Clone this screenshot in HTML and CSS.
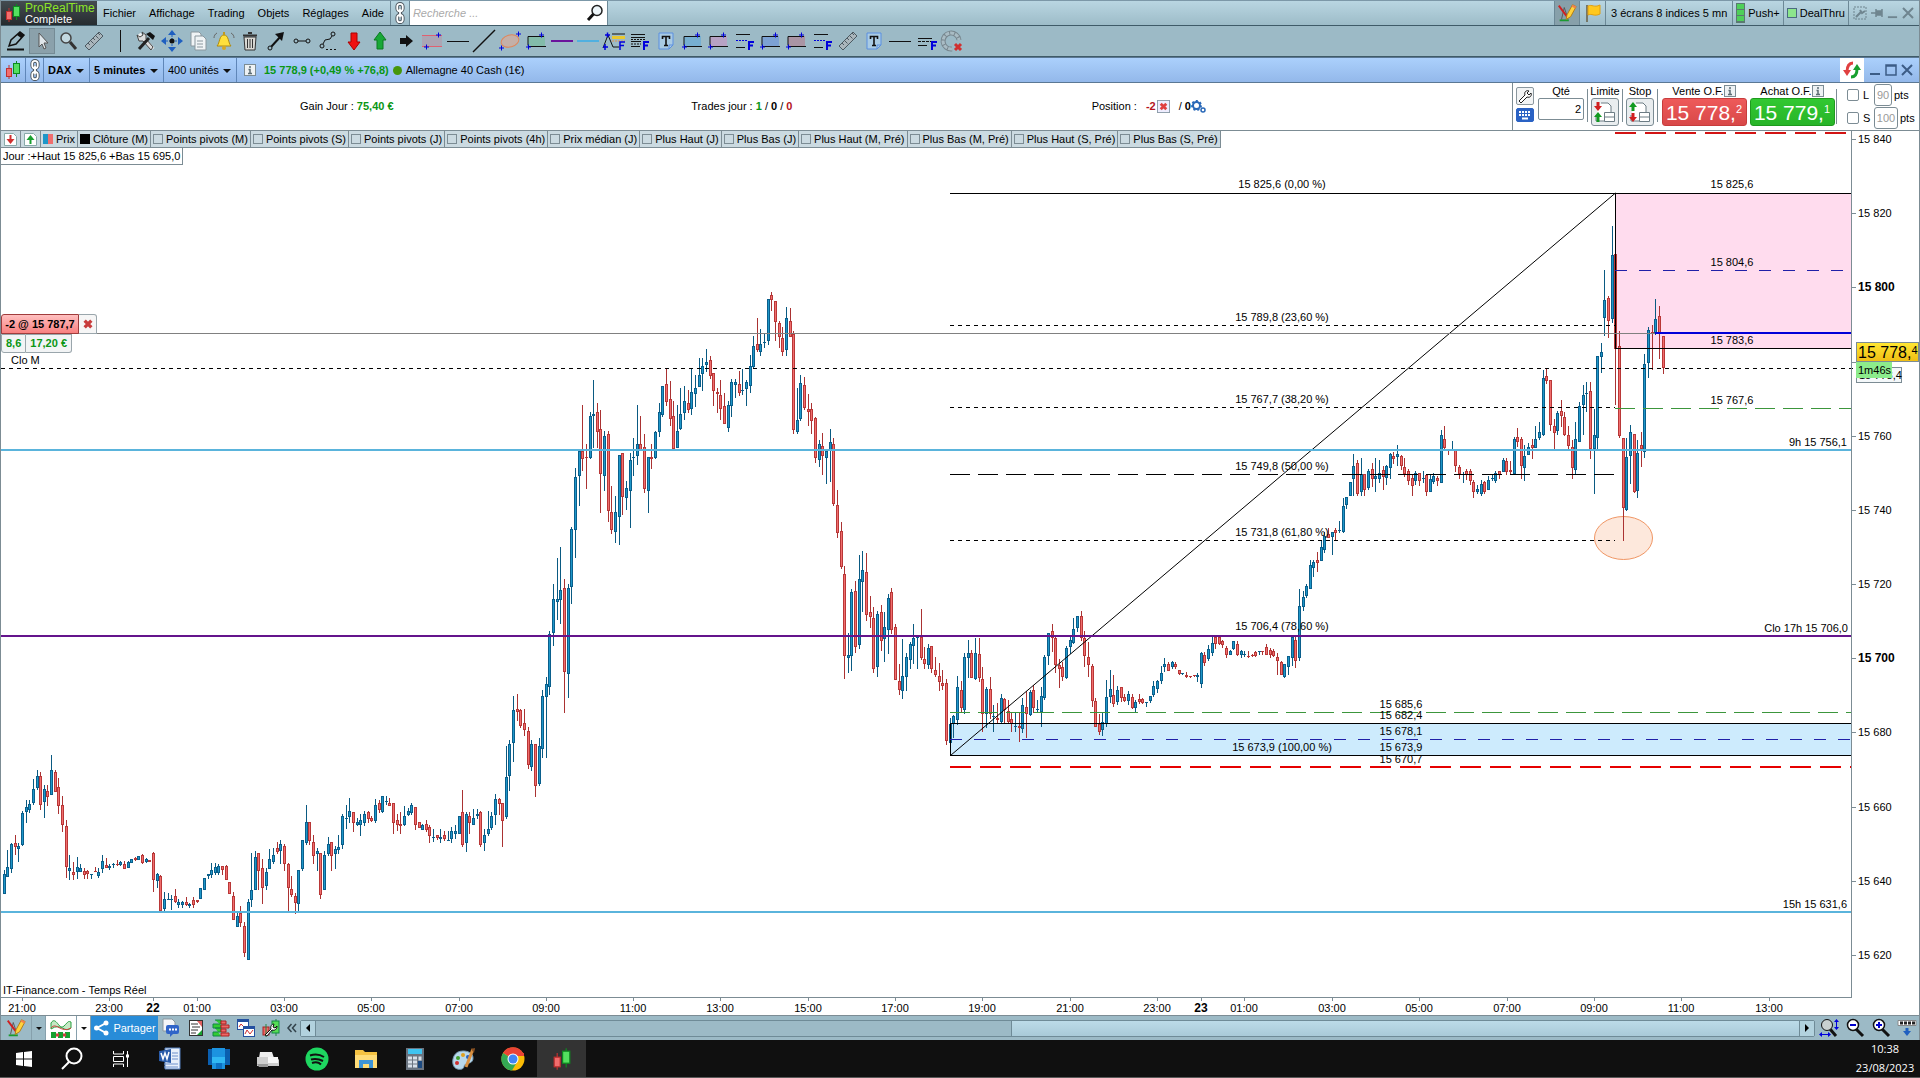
FILE: index.html
```html
<!DOCTYPE html>
<html lang="fr">
<head>
	<meta charset="UTF-8">
	<title>ProRealTime Complete - DAX 5 minutes</title>
	<link rel="stylesheet" href="styles.css">
</head>
<body>
	<!-- shared icons -->
	<svg class="defs" width="0" height="0">
		<symbol id="i-candles" viewBox="0 0 16 20">
			<path d="M4 5v14" stroke="#c03030"/><rect x="1.5" y="8.5" width="5" height="8" fill="#f26d6d" stroke="#c03030"/>
			<path d="M11.500 1v16" stroke="#0d8a20"/><rect x="8.500" y="3.500" width="6" height="10" fill="#54e060" stroke="#0d8a20"/>
		</symbol>
		<symbol id="i-chain" viewBox="0 0 12 24">
			<g fill="none" stroke="#4a545c" stroke-width="4"><rect x="3" y="2" width="6" height="8" rx="3"/><rect x="3" y="14" width="6" height="8" rx="3"/><path d="M6 7v10"/></g>
			<g fill="none" stroke="#fff" stroke-width="2"><rect x="3" y="2" width="6" height="8" rx="3"/><rect x="3" y="14" width="6" height="8" rx="3"/><path d="M6 7v10"/></g>
		</symbol>
		<symbol id="i-ruler" viewBox="0 0 24 24">
			<path d="M3 17L17 3l4 4L7 21z" fill="#aab6bc" stroke="#4c5a62"/><path d="M6 14l2 2M8.500 11.500l3 3M11 9l2 2M13.500 6.500l3 3M16 4l2 2" stroke="#4c5a62"/>
		</symbol>
		<symbol id="i-text" viewBox="0 0 24 24">
			<path d="M5 4h14v12l-4 4H5z" fill="#a9cbe4" stroke="#5b8fe0"/><path d="M19 16h-4v4" fill="none" stroke="#5b8fe0"/>
			<path d="M8.500 10V7.500h7V10M12 7.500v9M10 16.500h4" stroke="#111" stroke-width="1.600" fill="none"/>
		</symbol>
		<symbol id="i-zone" viewBox="0 0 24 24">
			<rect x="4" y="7" width="17" height="10" fill="currentColor" fill-opacity=".4"/><path d="M4 16.500V7.500h16M4 17.500h18" stroke="#111" fill="none"/>
			<path d="M2 18h5M4.500 15.500v5M15 6h5M17.500 3.500v5" stroke="#00d"/>
		</symbol>
		<symbol id="i-fib" viewBox="0 0 24 24">
			<path d="M4 5.500h14M4 18.500h9" stroke="#111"/><path d="M4 11.500h12" stroke="#00d" stroke-dasharray="2 1"/><path d="M17 21v-8h5M17 16.500h4" stroke="#00d" stroke-width="2" fill="none"/>
		</symbol>
		<symbol id="i-fiblines" viewBox="0 0 24 24">
			<path d="M3 5.500h14M3 8.500h14M3 12.500h10M3 17.500h9" stroke="#111"/><path d="M3 10.500h14M3 15h10" stroke="#111" stroke-dasharray="2 1"/><path d="M16 21v-8h5M16 16.500h4" stroke="#00d" stroke-width="2" fill="none"/>
		</symbol>
		<symbol id="i-draw" viewBox="0 0 24 24">
			<path d="M4 20h10" stroke="#1a9a30" stroke-width="2"/><path d="M6 19l3-13 4 12" stroke="#555" fill="none"/><path d="M3 4l9 12" stroke="#d02020" stroke-width="2"/>
			<path d="M12 14L18 3l4 2-6 11-5 3z" fill="#ffd23c" stroke="#b07a10"/><path d="M18 3l4 2-1 2-4-2z" fill="#f08050"/>
		</symbol>
		<symbol id="i-cross" viewBox="0 0 12 12">
			<path d="M2 2l8 8M10 2l-8 8" stroke="#c83c3c" stroke-width="4"/>
		</symbol>
		<symbol id="i-info" viewBox="0 0 12 12">
			<rect x=".5" y=".5" width="11" height="11" fill="#eef2f4" stroke="#7c8c94"/><path d="M6 2v2M4.500 5.500H6v4M4 9.500h4" stroke="#5c6c74" stroke-width="1.500" fill="none"/>
		</symbol>
		<symbol id="i-close" viewBox="0 0 12 12"><path d="M1 1l10 10M11 1L1 11" stroke="currentColor" stroke-width="2"/></symbol>
		<symbol id="i-min" viewBox="0 0 12 12"><path d="M1 10h10" stroke="currentColor" stroke-width="2"/></symbol>
	</svg>

	<div class="app">
		<header class="menubar">
			<div class="logo">
				<svg width="16" height="20"><use href="#i-candles"/></svg>
				<div class="logo-text"><b>ProRealTime</b><span>Complete</span></div>
			</div>
			<nav>
				<a href="#">Fichier</a><a href="#">Affichage</a><a href="#">Trading</a><a href="#">Objets</a><a href="#">Réglages</a><a href="#">Aide</a>
			</nav>
			<button class="chain" aria-label="Lier"><svg width="12" height="22"><use href="#i-chain"/></svg></button>
			<div class="search">
				<input type="text" placeholder="Recherche ..." aria-label="Recherche">
				<svg width="18" height="18" viewBox="0 0 18 18"><circle cx="11" cy="6.500" r="5" fill="#eef6fa" stroke="#222" stroke-width="1.500"/><path d="M7.500 10L2 16" stroke="#111" stroke-width="3"/></svg>
			</div>
			<div class="spacer"></div>
			<button class="pressed" aria-label="Dessin"><svg width="22" height="22"><use href="#i-draw"/></svg></button>
			<button class="flag" aria-label="Drapeau"><svg width="18" height="20" viewBox="0 0 18 20"><path d="M3 2v17" stroke="#776" stroke-width="2"/><path d="M4 3c4-2 6 2 12-1v9c-6 3-8-1-12 1z" fill="#ffc81e" stroke="#e0a010"/></svg></button>
			<button class="cell">3 écrans 8 indices 5 mn</button>
			<button class="cell push"><i></i>Push+</button>
			<button class="cell deal"><i></i>DealThru</button>
			<div class="cell win">
				<button aria-label="Options"><svg width="14" height="14" viewBox="0 0 14 14" fill="none" stroke="currentColor"><rect x="1" y="1" width="12" height="12" stroke-dasharray="2 1"/><path d="M3 11l5-5M7 4l2 3 3-2" stroke-width="2"/></svg></button>
				<button aria-label="Epingler"><svg width="12" height="12" viewBox="0 0 12 12"><path d="M0 6h5M5 2v8M6 4h4v4H6zM11 2v8" stroke="currentColor" fill="currentColor" stroke-width="1.500"/></svg></button>
				<button aria-label="Réduire"><svg width="11" height="11"><use href="#i-min"/></svg></button>
				<button aria-label="Fermer"><svg width="12" height="12"><use href="#i-close"/></svg></button>
			</div>
		</header>

		<div class="toolbar">
			<button aria-label="Crayon"><svg viewBox="0 0 24 24"><path d="M3 20.500h17" stroke="#111" stroke-width="2"/><path d="M5 17l2-6 9-8 4 3-8 9z" fill="none" stroke="#111" stroke-width="1.500"/><path d="M16 3l4 3-3 3-4-3z" fill="#111"/></svg></button>
			<button class="active" aria-label="Sélection"><svg viewBox="0 0 24 24"><path d="M9 4v14l3-3 2 5 2-1-2-5h4z" fill="#dfe6ea" stroke="#555"/></svg></button>
			<button aria-label="Loupe"><svg viewBox="0 0 24 24"><circle cx="10" cy="9" r="5" fill="#c2d8e0" stroke="#444" stroke-width="1.500"/><path d="M14 13l6 7" stroke="#333" stroke-width="3"/></svg></button>
			<button aria-label="Règle"><svg viewBox="0 0 24 24"><use href="#i-ruler"/></svg></button>
			<span class="bar"></span>
			<button aria-label="Outils"><svg viewBox="0 0 24 24"><path d="M5 5l14 15" stroke="#eee" stroke-width="4"/><path d="M3 6l3 2 3-2-1-3 4 3v4L19 18l-2 3-8-9-4 0z" fill="#ddd" stroke="#444"/><path d="M5 20l10-11" stroke="#222" stroke-width="3"/><path d="M12 5l4-2 5 4-2 4z" fill="#111"/></svg></button>
			<button aria-label="Déplacer"><svg viewBox="0 0 24 24"><path d="M12 1l4 5H8zM12 23l4-5H8zM1 12l5-4v8zM23 12l-5-4v8z" fill="#1f5fc0"/><path d="M12 6v12M6 12h12" stroke="#1f5fc0" stroke-dasharray="2 1"/><circle cx="12" cy="12" r="2.500" fill="#111"/></svg></button>
			<button aria-label="Copier"><svg viewBox="0 0 24 24"><g fill="#f0f4f6" stroke="#8a979e"><path d="M5 3h8l2 2v12H5z"/><path d="M9 7h8l3 3v11H9z"/></g><path d="M11 12h6M11 15h6M11 18h6" stroke="#8a979e"/></svg></button>
			<button aria-label="Alertes"><svg viewBox="0 0 24 24"><path d="M5 17c3-3 2-11 7-11s4 8 7 11z" fill="#ffe03c" stroke="#b08a10"/><circle cx="12" cy="19" r="2" fill="#d8a820"/><path d="M12 3v3" stroke="#c09a20" stroke-width="2"/><path d="M5 4c-2 1-3 3-3 5M19 4c2 1 3 3 3 5" stroke="#666" fill="none"/></svg></button>
			<button aria-label="Supprimer"><svg viewBox="0 0 24 24"><path d="M6 8h12l-1 13H7z" fill="#d9d9d4" stroke="#333"/><path d="M5 6.500h14M10 4h4" stroke="#333" stroke-width="2"/><path d="M9.500 10v9M12 10v9M14.500 10v9" stroke="#333"/></svg></button>
			<button aria-label="Flèche"><svg viewBox="0 0 24 24"><path d="M7 18L17 7" stroke="#111" stroke-width="2"/><path d="M20 3l-2 9-7-7z" fill="#111"/><circle cx="6" cy="19" r="2" fill="#9bb9c5" stroke="#111"/></svg></button>
			<button aria-label="Segment"><svg viewBox="0 0 24 24" fill="none" stroke="#111"><circle cx="6" cy="12" r="2"/><circle cx="18" cy="12" r="2"/><path d="M8 12h8"/></svg></button>
			<button aria-label="Ligne brisée"><svg viewBox="0 0 24 24" fill="none" stroke="#111"><circle cx="6" cy="17" r="2"/><circle cx="17" cy="5" r="2"/><path d="M7 15l2-4 5-1 2-3"/><path d="M10 20.500h10" stroke-dasharray="2 2"/></svg></button>
			<button aria-label="Flèche baisse"><svg viewBox="0 0 24 24"><path d="M9 4h6v9h3l-6 8-6-8h3z" fill="#f01010" stroke="#a00"/></svg></button>
			<button aria-label="Flèche hausse"><svg viewBox="0 0 24 24"><path d="M9 20h6v-9h3l-6-8-6 8h3z" fill="#18a838" stroke="#0a7a20"/></svg></button>
			<button aria-label="Flèche droite"><svg viewBox="0 0 24 24"><path d="M6 9h6V6l7 6-7 6v-3H6z" fill="#111"/></svg></button>
			<button aria-label="Canal"><svg viewBox="0 0 24 24"><path d="M2 7h20v10H2z" fill="#b49aa8" opacity=".6"/><path d="M2 6.500h20M2 17.500h20" stroke="#e06070"/><path d="M4 18h5M6.500 15.500v5M16 6h5M18.500 3.500v5" stroke="#00d"/></svg></button>
			<button aria-label="Horizontale"><svg viewBox="0 0 24 24"><path d="M1 12.500h22" stroke="#111"/></svg></button>
			<button aria-label="Droite"><svg viewBox="0 0 24 24"><path d="M1 23L23 1" stroke="#111" stroke-width="1.500"/></svg></button>
			<button aria-label="Ellipse"><svg viewBox="0 0 24 24"><ellipse cx="12" cy="12" rx="9" ry="6" fill="#c4b0a8" stroke="#e0865a" transform="rotate(-15 12 12)"/><path d="M1 19h5M3.500 16.500v5M18 5h5M20.500 2.500v5" stroke="#00d"/></svg></button>
			<button class="c-green" aria-label="Rectangle vert"><svg viewBox="0 0 24 24"><use href="#i-zone"/></svg></button>
			<button aria-label="Ligne violette"><svg viewBox="0 0 24 24"><path d="M1 12h22" stroke="#6a149c" stroke-width="2"/></svg></button>
			<button aria-label="Ligne bleue"><svg viewBox="0 0 24 24"><path d="M1 12h22" stroke="#50b0e0" stroke-width="2"/></svg></button>
			<button aria-label="Fibonacci"><svg viewBox="0 0 24 24"><path d="M1 19L6 6l5 12h6" stroke="#111" fill="none"/><path d="M10 5h13" stroke="#111"/><path d="M10 8.500h13" stroke="#e8c830" stroke-width="3"/><path d="M10 12h13" stroke="#e09050" stroke-dasharray="2 1"/><path d="M1 18h5M3 15v6M3 6h5M5.500 3.500v5M18 21v-8h5M18 16.500h4" stroke="#00d" stroke-width="1.500" fill="none"/></svg></button>
			<button aria-label="Niveaux"><svg viewBox="0 0 24 24"><use href="#i-fiblines"/></svg></button>
			<button aria-label="Texte"><svg viewBox="0 0 24 24"><use href="#i-text"/></svg></button>
			<button class="c-blue" aria-label="Zone bleue"><svg viewBox="0 0 24 24"><use href="#i-zone"/></svg></button>
			<button class="c-pink" aria-label="Zone rose"><svg viewBox="0 0 24 24"><use href="#i-zone"/></svg></button>
			<button aria-label="Niveaux 2"><svg viewBox="0 0 24 24"><use href="#i-fib"/></svg></button>
			<button class="c-indigo" aria-label="Zone indigo"><svg viewBox="0 0 24 24"><use href="#i-zone"/></svg></button>
			<button class="c-red" aria-label="Zone rouge"><svg viewBox="0 0 24 24"><use href="#i-zone"/></svg></button>
			<button aria-label="Niveaux 3"><svg viewBox="0 0 24 24"><use href="#i-fib"/></svg></button>
			<button aria-label="Mesure"><svg viewBox="0 0 24 24"><use href="#i-ruler"/></svg></button>
			<button aria-label="Texte 2"><svg viewBox="0 0 24 24"><use href="#i-text"/></svg></button>
			<button aria-label="Trait"><svg viewBox="0 0 24 24"><path d="M1 12.500h22" stroke="#111"/></svg></button>
			<button aria-label="Niveaux 4"><svg viewBox="0 0 24 24"><path d="M4 9.500h14M4 16.500h9" stroke="#111"/><path d="M4 12.500h13" stroke="#111" stroke-dasharray="3 1"/><path d="M18 21v-8h5M18 16.500h4" stroke="#00d" stroke-width="2" fill="none"/></svg></button>
			<button aria-label="Magnétisme"><svg viewBox="0 0 24 24"><path d="M12 20a8 8 0 1 1 7-9" fill="none" stroke="#77868e" stroke-width="5"/><path d="M12 20a8 8 0 1 1 7-9" fill="none" stroke="#a9bcc4" stroke-width="3" stroke-dasharray="4 1"/><path d="M15 15l6 6M21 15l-6 6" stroke="#d03030" stroke-width="3"/></svg></button>
		</div>

		<div class="titlebar">
			<span class="sym"><svg width="16" height="20"><use href="#i-candles"/></svg></span>
			<span class="lnk"><svg width="12" height="22"><use href="#i-chain"/></svg></span>
			<span class="drop"><select class="bold" aria-label="Valeur"><option>DAX</option></select></span>
			<span class="drop"><select class="bold" aria-label="Unité de temps"><option>5 minutes</option></select></span>
			<span class="drop"><select aria-label="Historique"><option>400 unités</option></select></span>
			<svg class="info" width="12" height="12"><use href="#i-info"/></svg>
			<b class="gain">15 778,9 (+0,49 % +76,8)</b>
			<i class="dot"></i>
			<span>Allemagne 40 Cash (1€)</span>
			<div class="spacer"></div>
			<button class="refresh" aria-label="Actualiser"><svg width="20" height="20" viewBox="0 0 20 20" fill="none" stroke-width="3"><path d="M11 3C6 3 5 7 5 12" stroke="#e04040"/><path d="M1 10h8l-4 6z" fill="#e04040"/><path d="M9 17c5 0 6-4 6-8" stroke="#18a030"/><path d="M11 10h8l-4-6z" fill="#18a030"/></svg></button>
			<div class="win">
				<button aria-label="Réduire"><svg width="12" height="12"><use href="#i-min"/></svg></button>
				<button aria-label="Agrandir"><svg width="12" height="12" viewBox="0 0 12 12"><path d="M1 1h10v10H1zM1 2h10" fill="none" stroke="currentColor" stroke-width="1.500"/></svg></button>
				<button aria-label="Fermer"><svg width="12" height="12"><use href="#i-close"/></svg></button>
			</div>
		</div>

		<section class="strip">
			<div class="stats">
				<div>Gain Jour : <b class="gain">75,40 €</b></div>
				<div>Trades jour : <b class="gain">1</b> / <b>0</b> / <b class="loss">0</b></div>
				<div class="pos">Position : <b class="loss">-2</b><svg class="sq" width="13" height="13" viewBox="-1 -1 14 14"><rect x="-.5" y="-.5" width="13" height="13" fill="#eef" stroke="#8a9aa8"/><path d="M3 3l6 6M9 3l-6 6" stroke="#e04040" stroke-width="3"/></svg> <span>/ <b>0</b></span><svg width="15" height="13" viewBox="0 0 15 13" fill="none" stroke="#2868b8"><circle cx="5.500" cy="5.500" r="3.500" stroke-width="2"/><circle cx="5.500" cy="5.500" r="4.500" stroke-width="2" stroke-dasharray="2 2"/><circle cx="12" cy="10" r="2" stroke-width="1.500"/></svg></div>
			</div>
			<form class="order">
				<div class="tools">
					<button type="button" aria-label="Réglages"><svg width="14" height="14" viewBox="0 0 14 14"><path d="M1 12l6-6c-1-3 1-5 4-4L9 4l2 2 2-2c1 3-1 5-4 4l-6 6z" fill="#fff" stroke="#222"/></svg></button>
					<button type="button" class="kb" aria-label="Clavier"><svg width="14" height="10" viewBox="0 0 14 10"><path d="M1 2h12M1 5h12" stroke="#fff" stroke-width="2" stroke-dasharray="2 1"/><path d="M4 8.500h6" stroke="#fff" stroke-width="2"/></svg></button>
				</div>
				<div class="col qty"><label for="qty">Qté</label><input id="qty" type="text" value="2"></div>
				<div class="col kind"><span>Limite</span><button type="button" aria-label="Limite"><svg width="26" height="24" viewBox="0 0 26 24"><path d="M9 3h7l3 3v15H4v-6" fill="#fff" stroke="#6c7c84"/><path d="M6 2v5" stroke="#d02020" stroke-width="3"/><path d="M2 6h8l-4 5z" fill="#d02020"/><path d="M6 22v-6" stroke="#109a20" stroke-width="3"/><path d="M2 17h8l-4-5z" fill="#109a20"/><path d="M12.500 12.500h10v9h-10zM12.500 17h10" fill="#fff" stroke="#6c7c84"/></svg></button></div>
				<div class="col kind"><span>Stop</span><button type="button" aria-label="Stop"><svg width="26" height="24" viewBox="0 0 26 24"><path d="M9 3h7l3 3v15H4v-6" fill="#fff" stroke="#6c7c84"/><path d="M6 11V6" stroke="#109a20" stroke-width="3"/><path d="M2 7h8L6 2z" fill="#109a20"/><path d="M6 13v6" stroke="#d02020" stroke-width="3"/><path d="M2 17h8l-4 5z" fill="#d02020"/><path d="M12.500 12.500h10v9h-10zM12.500 17h10" fill="#fff" stroke="#6c7c84"/></svg></button></div>
				<div class="col deal-col first"><span>Vente O.F.<svg width="12" height="12"><use href="#i-info"/></svg></span><button type="button" class="sell">15 778,<sup>2</sup></button></div>
				<div class="col deal-col"><span>Achat O.F.<svg width="12" height="12"><use href="#i-info"/></svg></span><button type="button" class="buy">15 779,<sup>1</sup></button></div>
				<div class="guards">
					<div><input type="checkbox" id="lim"><label for="lim">L</label><input type="text" value="90" aria-label="Limite pts">pts</div>
					<div><input type="checkbox" id="stp"><label for="stp">S</label><input type="text" class="wide" value="100" aria-label="Stop pts">pts</div>
				</div>
			</form>
		</section>

		<main class="chart">
			<svg id="plot"></svg>
			<div class="overlay">
				<div class="legend">
					<button aria-label="Descendre"><svg width="13" height="13" viewBox="0 0 13 13"><path d="M.5.5h9l3 3v9H.5z" fill="#fff" stroke="#8aa"/><path d="M6.500 2v5" stroke="#d03030" stroke-width="2"/><path d="M2.500 6h8l-4 5z" fill="#d03030"/></svg></button>
					<button aria-label="Monter"><svg width="13" height="13" viewBox="0 0 13 13"><path d="M.5.5h9l3 3v9H.5z" fill="#fff" stroke="#8aa"/><path d="M6.500 11V6" stroke="#18a030" stroke-width="2"/><path d="M2.500 7h8l-4-5z" fill="#18a030"/></svg></button>
					<span><i class="duo"></i>Prix</span>
					<span><i class="black"></i>Clôture (M)</span>
					<label><input type="checkbox">Points pivots (M)</label>
					<label><input type="checkbox">Points pivots (S)</label>
					<label><input type="checkbox">Points pivots (J)</label>
					<label><input type="checkbox">Points pivots (4h)</label>
					<label><input type="checkbox">Prix médian (J)</label>
					<label><input type="checkbox">Plus Haut (J)</label>
					<label><input type="checkbox">Plus Bas (J)</label>
					<label><input type="checkbox">Plus Haut (M, Pré)</label>
					<label><input type="checkbox">Plus Bas (M, Pré)</label>
					<label><input type="checkbox">Plus Haut (S, Pré)</label>
					<label><input type="checkbox">Plus Bas (S, Pré)</label>
				</div>
				<div class="day">Jour :+Haut 15 825,6 +Bas 15 695,0</div>
			</div>
			<div class="position" data-price="15787.7">
				<div><b class="entry">-2 @ 15 787,7</b><button aria-label="Clôturer"><svg width="10" height="10"><use href="#i-cross"/></svg></button></div>
				<div class="pnl"><b>8,6</b><b>17,20 €</b></div>
			</div>
			<div class="tag close" data-price="15778.4">15 778,4</div>
			<div class="tag last" data-price="15778.4">15 778,<sup>4</sup></div>
			<div class="tag timer" data-price="15778.4">1m46s</div>
		</main>

		<footer class="bottombar">
			<button class="w30" aria-label="Dessin"><svg width="22" height="22"><use href="#i-draw"/></svg></button>
			<button class="caret" aria-label="Menu dessin"></button>
			<button class="w30 white" aria-label="Indicateurs"><svg width="24" height="22" viewBox="0 0 24 22" fill="none"><path d="M2 6c5-8 8 8 13 3s4-5 7-4v6c-6 6-10-6-20 1z" fill="#c4e8c4" stroke="#28a040"/><path d="M2 11c5-7 10 6 20 0" stroke="#d04040"/><path d="M2 18h20" stroke="#18a030" stroke-width="6" stroke-dasharray="5 2"/><path d="M7 18h14" stroke="#d04040" stroke-width="3" stroke-dasharray="3 4"/></svg></button>
			<button class="caret white" aria-label="Menu indicateurs"></button>
			<button class="share"><svg width="16" height="16" viewBox="0 0 16 16"><path d="M13 3L4 8l9 5" stroke="#fff" stroke-width="2" fill="none"/><g fill="#fff"><circle cx="13" cy="3" r="2.500"/><circle cx="3.500" cy="8" r="2.500"/><circle cx="13" cy="13" r="2.500"/></g></svg>Partager</button>
			<div class="icons">
				<button aria-label="Commentaires"><svg viewBox="0 0 20 20"><path d="M2 1h9l3 3v9H2z" fill="#f4f6f8" stroke="#8a979e"/><rect x="5" y="7" width="13" height="9" rx="2" fill="#2f64c8"/><path d="M9 15v4l4-4z" fill="#2f64c8"/><path d="M8 11.500h8" stroke="#fff" stroke-width="2" stroke-dasharray="2 1"/></svg></button>
				<button aria-label="Ordres"><svg viewBox="0 0 20 20"><rect x="3.500" y="2.500" width="13" height="15" fill="#fff" stroke="#333"/><path d="M5 6h7M6 9h8M5 12h7M5 15h5" stroke="#333"/><path d="M11 3h5v6z" fill="#e06060"/><path d="M11 17l5-5v5z" fill="#18a030"/></svg></button>
				<button aria-label="Carnet"><svg viewBox="0 0 20 20"><path d="M4 2h6v4H2v4h8v-3M4 10h6v4H2v4h8" fill="#3c3" stroke="#184"/><path d="M10 3h5v3h-5zM10 7h8v3h-8zM10 11h5v3h-5zM10 15h8v3h-8z" fill="#e66" stroke="#a22"/></svg></button>
				<button aria-label="Fenêtres"><svg viewBox="0 0 20 20"><g fill="#fff" stroke="#2450a0"><rect x="1.500" y="1.500" width="11" height="10"/><rect x="7.500" y="8.500" width="11" height="10"/></g><path d="M2 3h10M8 10h10" stroke="#2450a0" stroke-width="2"/><path d="M3 9l2-3 2 2M9 16l2-4 3 4 3-4" stroke="#d03030" fill="none"/></svg></button>
				<button aria-label="ProOrder"><svg viewBox="0 0 20 20"><rect x="2" y="9" width="6" height="8" fill="#e66" stroke="#a22"/><path d="M5 6v13M15 1v17" stroke="#284"/><rect x="11" y="3" width="7" height="12" fill="#5d5" stroke="#184"/><path d="M4 17l6-6c-1-3 1-5 3-5l-1 3 2 1 2-2c0 3-2 5-5 4l-5 6z" fill="#fff" stroke="#111"/></svg></button>
			</div>
			<button class="fold" aria-label="Replier"><svg width="10" height="10" viewBox="0 0 10 10" fill="none" stroke="#33434b" stroke-width="1.500"><path d="M4.500 1L1 5l3.500 4M9 1L5.500 5 9 9"/></svg></button>
			<div class="scroll">
				<button class="end" aria-label="Gauche"><svg width="6" height="8"><path d="M5 0v8L1 4z"/></svg></button>
				<div class="before"></div>
				<div class="thumb"></div>
				<button class="end" aria-label="Droite"><svg width="6" height="8"><path d="M1 0v8l4-4z"/></svg></button>
			</div>
			<div class="zooms">
				<button aria-label="Zoom auto"><svg viewBox="0 0 20 20"><path d="M11 11l6 7" stroke="#111" stroke-width="3"/><circle cx="8" cy="7" r="5.500" fill="#c8d0d0" stroke="#111"/><path d="M2 16.500h8M17.500 2v9" stroke="#00d"/><path d="M3 14l-3 2.500L3 19zM9 14l3 2.500L9 19zM15 4l2.500-3L20 4zM15 9l2.500 3L20 9z" fill="#00d"/></svg></button>
				<button aria-label="Zoom arrière"><svg viewBox="0 0 20 20"><path d="M11 11l7 7" stroke="#111" stroke-width="3"/><circle cx="8" cy="7" r="5.500" fill="#fff" stroke="#111" stroke-width="1.500"/><path d="M5 7h6" stroke="#00c" stroke-width="2"/></svg></button>
				<button aria-label="Zoom avant"><svg viewBox="0 0 20 20"><path d="M11 11l7 7" stroke="#111" stroke-width="3"/><circle cx="8" cy="7" r="5.500" fill="#fff" stroke="#111" stroke-width="1.500"/><path d="M5 7h6M8 4v6" stroke="#00c" stroke-width="2"/></svg></button>
				<button aria-label="Espacement"><svg viewBox="0 0 20 20"><path d="M1 2.500h18v5H1z" fill="#fff" stroke="#888"/><path d="M3 5h15" stroke="#222" stroke-width="3" stroke-dasharray="3 1"/><path d="M10 10v4" stroke="#2060c0" stroke-width="3"/><path d="M6 13h8l-4 5z" fill="#2060c0"/></svg></button>
			</div>
		</footer>
	</div>

	<div class="taskbar">
		<button aria-label="Démarrer"><svg viewBox="0 0 24 24" fill="#fff"><path d="M4 6l7-1v6.500H4zM12 5l8-1v7.500h-8zM4 12.500h7V19l-7-1zM12 12.500h8V20l-8-1z"/></svg></button>
		<button aria-label="Rechercher"><svg viewBox="0 0 24 24" fill="none" stroke="#fff" stroke-width="2"><circle cx="14" cy="9" r="7.500"/><path d="M9 15l-7 7"/></svg></button>
		<button aria-label="Vue des tâches"><svg viewBox="0 0 24 24" fill="none" stroke="#fff"><path d="M4.500 4v3h10V4M4.500 20v-3h10v3M4.500 9.500h10v5h-10zM18.500 4v16"/><path d="M17 9h3" stroke-width="3"/></svg></button>
		<button aria-label="Word"><svg viewBox="0 0 24 24"><path d="M7 1h15v21H7z" fill="#e8f0fa" stroke="#5580c0"/><path d="M14 6h6M14 9h6M14 12h6M6 17h14M6 20h14" stroke="#6c90cc"/><path d="M1 4l12-2v14L1 14z" fill="#2a5caa"/><path d="M3 6l2 6 2-6 2 6 2-7" fill="none" stroke="#fff" stroke-width="1.500"/></svg></button>
		<button aria-label="Votre téléphone"><svg viewBox="0 0 24 24"><rect x="1" y="2" width="22" height="16" fill="#0a5fb0"/><rect x="5" y="1" width="13" height="21" fill="#1c93e0"/><path d="M5 10h13v6H5z" fill="#30b8f4"/><path d="M9 16h6v6H9z" fill="#0c70c4"/></svg></button>
		<button aria-label="Imprimante"><svg viewBox="0 0 24 24"><path d="M4 5h12l2 6H3z" fill="#eee"/><path d="M1 10h20l2 3v6H1z" fill="#cfcfcf"/><path d="M12 10h10v6H12z" fill="#f8f8f8"/><path d="M1 17h11v3H3z" fill="#999"/></svg></button>
		<button aria-label="Spotify"><svg viewBox="0 0 24 24"><circle cx="12" cy="12" r="11.500" fill="#1ed760"/><path d="M5 8.500c5-1.500 10-1 14 1.500M6 12.500c4-1 8-.5 12 1.500M7 16c3-1 7-.5 9 1.500" fill="none" stroke="#111" stroke-width="2"/></svg></button>
		<button aria-label="Explorateur"><svg viewBox="0 0 24 24"><path d="M1 3h8l2 2h12v16H1z" fill="#f5c242"/><path d="M1 8h22v13H1z" fill="#ffdc78"/><path d="M5 21v-8h14v8h-4v-4H9v4z" fill="#3d94d8"/></svg></button>
		<button aria-label="Calculatrice"><svg viewBox="0 0 24 24"><rect x="3" y="1" width="18" height="22" fill="#6a7480"/><rect x="5" y="2" width="14" height="5" fill="#40c4f0"/><path d="M5 11h9M5 15h9M5 19h9" stroke="#d8e0e8" stroke-width="3" stroke-dasharray="4 1"/><path d="M17 9.500v4" stroke="#d8e0e8" stroke-width="3"/><path d="M17 14v7" stroke="#1c4a80" stroke-width="4"/></svg></button>
		<button aria-label="Paint"><svg viewBox="0 0 24 24"><path d="M11 4C2 4 0 12 1 17s6 6 9 5 1-4 4-5 7-1 7-6-5-7-10-7z" fill="#b8d8ec" stroke="#7a9cb4"/><circle cx="6" cy="11" r="2" fill="#40a030"/><circle cx="11" cy="8" r="2" fill="#e0a020"/><circle cx="5" cy="16" r="2" fill="#d03030"/><circle cx="16" cy="10" r="2" fill="#2860c0"/><path d="M21 2l-7 18" stroke="#d89040" stroke-width="3"/><path d="M19 2l4-1-1 5z" fill="#8a5020"/></svg></button>
		<button aria-label="Chrome"><svg viewBox="0 0 24 24"><circle cx="12" cy="12" r="11.500" fill="#fbbc05"/><path d="M12 12L2 6a11.500 11.500 0 0 1 20 0z" fill="#ea4335"/><path d="M2 6a11.500 11.500 0 0 0 9 17.500L16 15z" fill="#34a853"/><path d="M11 6h12v3H12z" fill="#ea4335"/><circle cx="12" cy="12" r="5.500" fill="#fff"/><circle cx="12" cy="12" r="4.500" fill="#4285f4"/></svg></button>
		<button class="on" aria-label="ProRealTime"><svg viewBox="0 0 16 20"><use href="#i-candles"/></svg></button>
		<div class="spacer"></div>
		<div class="clock"><span>10:38</span><span>23/08/2023</span></div>
	</div>

	<script src="chart.js"></script>
</body>
</html>
```
FILE: styles.css
```css
* {
	box-sizing: border-box;
	margin: 0;
	padding: 0;
}
body {
	display: flex;
	flex-direction: column;
	height: 100vh;
	overflow: hidden;
	background: #fff;
	color: #000;
	font: 11px/14px "Liberation Sans", Arial, sans-serif;
}
button, input, select {
	font: inherit;
	color: inherit;
	border: 0;
	background: none;
}
button {
	display: flex;
	align-items: center;
	justify-content: center;
}
a {
	color: inherit;
	text-decoration: none;
}
svg {
	display: block;
	flex: none;
}
input[type=checkbox] {
	appearance: none;
	flex: none;
	border: 1px solid #7c8c94;
}
.defs {
	position: absolute;
}
.spacer {
	flex: 1;
}
.bold {
	font-weight: bold;
}
.gain {
	color: #0a9614;
}
.loss {
	color: #b4141e;
}
.app {
	flex: 1;
	min-height: 0;
	display: flex;
	flex-direction: column;
	border: 1px solid #7c8c94;
	border-width: 0 1px;
}

/* menu */
.menubar {
	display: flex;
	align-items: stretch;
	height: 26px;
	background: linear-gradient(#b9d6e2, #9dbcc8);
	border-top: 1px solid #7c98a8;
	border-bottom: 1px solid #3f5b68;
}
.logo {
	display: flex;
	align-items: center;
	gap: 4px;
	width: 96px;
	padding-left: 4px;
	background: linear-gradient(#444b50, #262c30);
}
.logo-text b {
	display: block;
	font: 12px/12px "Liberation Sans", Arial, sans-serif;
	color: #8ce628;
}
.logo-text span {
	display: block;
	line-height: 11px;
	color: #fff;
}
.menubar nav {
	display: flex;
	align-items: center;
	gap: 13px;
	padding: 0 6px;
}
.chain {
	width: 19px;
	border-left: 1px solid #6c8896;
}
.search {
	display: flex;
	align-items: center;
	width: 199px;
	padding: 0 3px;
	background: #fff;
	border: 1px solid #6c8896;
	border-width: 0 1px;
}
.search input {
	flex: 1;
	min-width: 0;
	font-style: italic;
	outline: 0;
}
.search input::placeholder {
	color: #aaa;
}
.pressed {
	width: 26px;
	background: #87a0aa;
	border: 1px solid #6c8896;
	border-width: 0 1px;
}
.flag {
	width: 25px;
}
.cell {
	gap: 3px;
	padding: 0 3px;
	border-left: 1px solid #6c8896;
}
.flag + .cell {
	padding: 0 5px;
}
.push i {
	width: 9px;
	height: 20px;
	border: 1px solid #5a7a70;
	background: repeating-linear-gradient(#4ed05a 0 5px, #5a7a70 5px 6px);
}
.deal i {
	width: 10px;
	height: 10px;
	background: #8ce68c;
	border: 1px solid #4c6c80;
}
.win {
	display: flex;
	align-items: center;
	color: #6f858f;
}
.menubar .win {
	gap: 4px;
	padding: 0 5px 0 4px;
}

/* drawing tools */
.toolbar {
	display: flex;
	align-items: center;
	height: 31px;
	padding-left: 2px;
	background: #9cbac6;
	border-bottom: 1px solid #3f5b68;
}
.toolbar button, .toolbar .bar {
	width: 26px;
	height: 26px;
}
.toolbar svg {
	width: 24px;
	height: 24px;
}
.toolbar .active {
	background: #8ba1ab;
	border: 1px solid #758b95;
}
.toolbar .bar {
	background: linear-gradient(#111, #111) center / 1px 22px no-repeat;
}
.c-green {
	color: #60c080;
}
.c-blue {
	color: #40a0e0;
}
.c-pink {
	color: #e080c0;
}
.c-indigo {
	color: #5080e8;
}
.c-red {
	color: #c06070;
}

/* window title */
.titlebar {
	display: flex;
	align-items: center;
	height: 26px;
	background: linear-gradient(#abd0fc, #93b8ea);
	border: 1px solid #5b7894;
	border-width: 1px 0;
}
.titlebar > .sym, .titlebar > .lnk, .drop {
	display: flex;
	align-items: center;
	justify-content: center;
	align-self: stretch;
	border-right: 1px solid #5f86b8;
}
.sym {
	width: 25px;
}
.lnk {
	width: 18px;
}
.drop {
	position: relative;
}
.drop select {
	appearance: none;
	padding: 0 17px 0 4px;
}
.drop:after {
	content: '';
	position: absolute;
	right: 5px;
	top: 11px;
	border: 4px solid transparent;
	border-top-color: #111;
	border-bottom: 0;
}
.info {
	margin: 0 8px 0 7px;
}
.dot {
	width: 9px;
	height: 9px;
	margin: 0 4px;
	border-radius: 50%;
	background: #46960a;
}
.refresh {
	width: 24px;
	align-self: stretch;
	background: #fff;
}
.titlebar .win {
	gap: 4px;
	padding: 0 6px 0 5px;
	color: #3c5c86;
}

/* trading strip */
.strip {
	display: flex;
	height: 48px;
	border-bottom: 1px solid #7c8c94;
}
.stats {
	flex: 1;
	display: grid;
	grid-template-columns: 391fr 400fr 420fr;
	align-items: center;
	padding: 0 0 1px 299px;
}
.pos {
	display: flex;
	align-items: center;
}
.pos .loss {
	margin-left: 9px;
}
.pos .sq {
	margin: 0 9px 0 1px;
}
.order {
	display: flex;
	align-items: flex-start;
	width: 407px;
	border-left: 1px solid #7c8c94;
}
.tools {
	width: 25px;
	padding: 4px 3px 0;
}
.tools button {
	width: 18px;
	height: 18px;
	border: 1px solid #8a979e;
	border-radius: 2px;
	background: #f2f4f5;
}
.tools .kb {
	height: 14px;
	margin-top: 3px;
	background: #2a62c4;
	border-color: #2a62c4;
}
.col {
	display: flex;
	flex-direction: column;
	align-items: center;
}
.col > label, .col > span {
	display: flex;
	align-items: center;
	height: 15px;
}
.qty {
	width: 49px;
	padding-right: 3px;
}
.qty input {
	width: 46px;
	height: 22px;
	padding-right: 2px;
	text-align: right;
	border: 1px solid #7c8c94;
	border-radius: 2px;
}
.kind, .deal-col.first {
	border-image: linear-gradient(transparent 7px, #7c8c94 7px 38px, transparent 38px) 1;
	border-left: 1px solid;
}
.kind {
	width: 35px;
}
.kind button {
	width: 28px;
	height: 28px;
	background: #e9edef;
	border: 1px solid #7c8c94;
	border-radius: 3px;
}
.deal-col {
	width: 88px;
}
.deal-col.first {
	width: 91px;
	padding-left: 2px;
}
.deal-col button {
	width: 85px;
	height: 28px;
	align-items: flex-start;
	border-radius: 3px;
	color: #fff;
	font-size: 21px;
	line-height: 28px;
}
.deal-col sup {
	font-size: 11px;
	line-height: 20px;
}
.sell {
	background: linear-gradient(#ee5a5a, #d84848);
	border: 1px solid #c83c3c;
}
.buy {
	background: linear-gradient(#32c832, #28b428);
	border: 1px solid #1e9a1e;
}
.guards {
	flex: 1;
	padding-left: 10px;
	border-image: linear-gradient(transparent 7px, #7c8c94 7px 40px, transparent 40px) 1;
	border-left: 1px solid;
}
.guards div {
	display: flex;
	align-items: center;
	gap: 2px;
	height: 23px;
}
.guards input[type=checkbox] {
	width: 12px;
	height: 12px;
	border-radius: 2px;
}
.guards label {
	width: 11px;
	padding-left: 2px;
}
.guards input[type=text] {
	width: 18px;
	height: 22px;
	text-align: center;
	color: #999;
	border: 1px solid #7c8c94;
	border-radius: 3px;
}
.guards input.wide[type=text] {
	width: 24px;
}

/* chart */
.chart {
	flex: 1;
	min-height: 0;
	position: relative;
	overflow: hidden;
}
#plot {
	width: 100%;
	height: 100%;
}
#plot text {
	font-size: 11px;
	fill: #000;
}
#plot .day-mark {
	font-size: 12px;
	font-weight: bold;
}
.overlay {
	position: absolute;
	left: 0;
	top: 0;
}
.legend {
	display: flex;
	height: 17px;
}
.legend > * {
	display: flex;
	align-items: center;
	gap: 3px;
	padding: 0 2px;
	background: #cbdae1;
	border: 1px solid #7c8c94;
	border-width: 0 1px 1px 0;
}
.legend button {
	width: 20px;
}
.legend input, .legend i {
	width: 10px;
	height: 10px;
}
.legend .black {
	background: #000;
}
.legend .duo {
	background: linear-gradient(90deg, #1e96c8 50%, #f06e6e 50%);
}
.day {
	width: max-content;
	height: 17px;
	padding: 0 2px;
	line-height: 16px;
	background: #fff;
	border: 1px solid #7c8c94;
	border-width: 0 1px 1px 0;
}
.position {
	position: absolute;
	left: 0;
	margin-top: -19px;
}
.position div {
	display: flex;
	height: 20px;
}
.entry {
	width: 78px;
	text-align: center;
	line-height: 18px;
	background: linear-gradient(#ffc0c0, #f88080);
	border: 1px solid #a03c3c;
	border-radius: 3px 0 0 0;
}
.position button {
	width: 18px;
	background: #f6f6f6;
	border: 1px solid #9aa6ac;
	border-left: 0;
	border-radius: 0 3px 0 0;
}
.position .pnl {
	height: 19px;
	color: #0a9614;
	line-height: 17px;
}
.pnl b {
	padding: 0 4px;
	background: #f2f4f5;
	border: 1px solid #9aa6ac;
	border-radius: 0 0 0 3px;
}
.pnl b + b {
	border-left: 0;
	border-radius: 0 0 3px 0;
}
.tag {
	position: absolute;
	left: calc(100% - 63px);
	padding-left: 2px;
	white-space: nowrap;
	border: 1px solid #7c8c94;
}
.last {
	width: 63px;
	height: 20px;
	margin-top: -26px;
	display: flex;
	padding-left: 1px;
	font-size: 16px;
	line-height: 19px;
	background: linear-gradient(#ffe632, #f0be14);
}
.last sup {
	font-size: 11px;
	line-height: 14px;
}
.timer {
	width: 36px;
	height: 16px;
	margin-top: -6px;
	background: #8cec8c;
	border: 0;
	line-height: 16px;
}
.close {
	width: 46px;
	height: 16px;
	margin-top: -1px;
	background: #f4f8fa;
}

/* bottom bar */
.bottombar {
	display: flex;
	align-items: center;
	height: 25px;
	background: #9cbac6;
	border-top: 1px solid #7c8c94;
}
.bottombar > button {
	align-self: stretch;
}
.w30 {
	width: 30px;
}
.caret {
	width: 15px;
	border: 1px solid #86a0ac;
	border-width: 0 1px;
}
.caret:after {
	content: '';
	border: 3px solid transparent;
	border-top-color: #111;
	border-bottom: 0;
}
.white {
	background: #fff;
}
.share {
	width: 67px;
	gap: 4px;
	color: #fff;
	background: #288cd8;
}
.icons, .zooms {
	display: flex;
}
.icons button {
	width: 25px;
}
.icons svg, .zooms svg {
	width: 20px;
	height: 20px;
}
.fold {
	width: 17px;
}
.scroll {
	flex: 1;
	display: flex;
	height: 17px;
	border: 1px solid #6f8b97;
	border-radius: 2px;
}
.scroll .before {
	flex: 696;
}
.scroll .thumb {
	flex: 788;
	background: linear-gradient(#bcdbe8, #a9cad8);
	border-left: 1px solid #6f8b97;
}
.scroll .end {
	width: 15px;
	background: #b2d2de;
	border: 1px solid #6f8b97;
	border-width: 0 1px 0 0;
}
.scroll .end:last-child {
	border-width: 0 0 0 1px;
}
.zooms {
	gap: 6px;
	padding: 0 2px 0 4px;
}

/* taskbar */
.taskbar {
	display: flex;
	height: 38px;
	background: #101010;
	border-bottom: 1px solid #5a5a5a;
}
.taskbar button {
	width: 49px;
}
.taskbar button:first-child {
	width: 47px;
}
.taskbar svg {
	width: 24px;
	height: 24px;
}
.taskbar .on {
	background: #333;
}
.clock {
	display: flex;
	flex-direction: column;
	justify-content: space-around;
	width: 70px;
	text-align: center;
	color: #fff;
	font-family: "Open Sans", "Noto Sans", sans-serif;
}
```
FILE: chart.js
```javascript
// reference size of the plot, in chart units
var BASE_W = 1850, BASE_H = 866;
var LEFT = 1, TOP = 131;
var AXIS_W = 68, AXIS_H = 18;

// candles by block : u/d + x, high, body top, body bottom, low
var blocks = [
	{x: 0, y: 640, sx: 2.8, sy: 3, rows: 'u12 690 703 761 761,u21 630 682 710 710,u32 608 613 686 698,d43 585 610 620 645,u51 608 618 626 666,u63 513 520 614 618,u75 480 501 515 549,u83 480 492 509 520,u94 417 448 489 495,u105 390 408 443 450,d113 396 408 494 509,u124 435 447 487 534,d133 434 453 470 497,u144 345 391 464 464,d155 390 396 455 455,d164 414 441 497 522,d175 468 495 555 576,d186 540 559 681 714,u195 646 684 693 720,d206 666 696 705 720,' +
		'u217 652 681 696 717,u225 672 684 695 697,d237 684 693 704 717,d245 690 693 703 717,u256 702 702 705 717,d267 681 693 696 696,u276 684 697 708 715,u287 645 663 686 698,d298 654 675 683 685,u306 672 678 684 690,u318 669 673 676 684,d329 660 672 674 677,u338 663 667 674 678,d348 663 672 686 687,u360 663 667 684 684,u368 657 657 670 670,d379 651 655 661 663,u388 648 649 659 660,d398 642 646 670 671,u410 654 658 667 670,' +
		'd419 659 661 665 665,d430 636 640 719 756,u441 700 703 722 744,d449 705 709 814 816,u461 756 777 806 816,u472 759 777 780 780,u480 765 777 780 810,d491 747 769 787 789,u500 777 786 795 803,u511 783 786 794 804,d522 771 786 795 797,u531 789 793 797 804,d541 771 780 795 803,d552 780 781 787 788,u562 744 744 776 776,u572 714 714 751 751,u584 702 703 708 717,u592 669 690 705 714,u603 669 682 700 705,u611 672 678 699 705,' +
		'd623 677 679 689 705,d634 676 678 719 720,d642 726 727 761 762,d653 756 768 839 840,u665 816 828 860 861,d673 798 819 848 861,d684 846 858 938 951,u696 776 786 959 960,u704 639 751 780 801,u715 633 652 749 750,d723 639 640 692 750,d735 657 684 743 792,u746 684 696 738 750,u754 627 657 686 688,u766 625 644 665 672,d776 606 625 635 643,u785 600 612 632 672,d796 612 618 671 693,d808 669 672 744 813,d816 708 747 765 771,' +
		'd827 760 768 790 822,u836 690 690 791 815,u847 600 600 687 693,u858 495 546 609 615,d867 545 546 602 615,d878 585 606 647 672,u888 624 633 641 693,d897 639 640 765 777,u908 633 645 749 750,u919 591 612 641 649,d929 606 607 647 693,u940 618 626 641 687,u948 585 620 630 641,u959 522 528 615 628,u970 495 534 537 567,u979 474 513 530 549,d990 516 516 549 576,u1001 534 546 555 558,u1009 522 540 555 588,u1020 513 522 549 558,' +
		'd1031 513 517 536 549,d1040 528 534 543 545,u1051 477 495 543 549,d1062 480 490 510 518,u1071 468 469 515 518,u1082 468 483 486 495,d1090 474 490 497 498,d1102 490 490 548 582,d1113 522 540 555 572,d1121 516 553 557 582,u1132 498 528 555 557,u1144 504 513 525 527,u1152 489 495 518 525,d1163 501 502 555 570,d1174 546 547 563 564,u1183 552 555 570 570,d1194 540 553 570 576,d1202 555 562 587 609,u1214 567 591 594 605,d1225 585 586 593 600,' +
		'u1233 567 591 597 609,d1245 573 586 597 603,u1256 573 601 603 603,u1264 561 574 597 609,u1275 555 574 581 597,u1286 528 528 581 582,d1295 450 517 615 620,u1306 516 522 608 636,d1314 516 528 548 582,u1326 508 534 554 556,u1337 507 521 529 536,d1345 513 517 615 620,u1356 567 585 608 633,u1367 513 568 581 587,u1376 516 528 564 570,u1388 462 477 525 555,d1398 474 478 491 525,d1407 489 490 543 621,u1418 318 411 530 536,u1426 300 312 407 453,' +
		'u1438 168 210 308 366,d1449 162 207 217 243,d1458 207 210 257 264,d1468 207 249 270 288,d1480 261 273 375 387,u1488 300 313 380 393,d1499 312 313 437 471,u1510 294 319 431 438'},
	{x: 540, y: 280, sx: 3, sy: 3, rows: 'u7 1230 1248 1406 1434,u19 1191 1213 1252 1434,u28 1053 1063 1220 1245,u40 912 957 1059 1098,u52 834 957 965 1020,u61 801 930 959 1032,d73 897 924 1175 1299,u85 912 924 1181 1254,u94 741 747 920 972,u106 564 591 749 834,u118 513 513 587 678,d127 375 513 536 573,d139 492 531 535 627,u151 396 408 534 537,u160 300 402 409 504,d172 369 396 455 504,d181 390 447 581 699,u193 453 468 587 633,d205 453 462 692 726,d214 618 696 749 762,' +
		'u226 648 696 755 789,u238 525 525 710 795,d247 519 520 650 705,u259 603 625 653 690,u271 519 540 632 744,u280 474 531 535 588,u292 375 492 527 555,d301 408 492 510 512,d313 462 501 626 639,u325 530 531 632 699,d334 492 531 536 567,u346 453 456 534 537,u358 369 396 455 471,u367 318 319 404 411,d379 264 312 365 378,d391 303 357 416 438,d400 363 408 507 507,u412 375 453 503 504,u421 324 402 448 449,u433 318 363 398 420,' +
		'd445 330 369 391 399,u454 264 336 386 405,u466 285 324 341 381,u478 234 286 320 321,u487 234 259 281 333,u499 207 246 254 276,d511 228 240 287 297,d520 279 280 332 378,d532 324 336 341 399,d541 300 345 386 420,d553 339 378 431 432,u565 363 376 443 456,u574 297 306 377 411,u586 297 306 314 354,d598 273 312 338 348,u607 267 330 333 345,u619 300 306 326 378,u631 225 259 317 339,u640 168 198 262 267,d652 114 192 209 215,' +
		'u661 147 192 215 227,u673 162 186 189 203,u685 57 57 182 195,d694 36 45 59 93,d706 63 64 125 183,d718 123 129 170 204,d727 141 174 215 228,u739 81 114 209 228,d751 84 123 170 171,d760 153 162 449 461,u772 324 420 455 461,u781 285 310 416 422,d793 291 316 383 389,d805 342 387 395 438,d814 369 387 422 462,d826 410 414 534 548,u838 480 492 539 561,d847 459 498 527 585,u859 513 513 533 612,u871 447 486 510 606,' +
		'd880 474 492 671 678,d892 630 675 760 774,d904 726 753 860 866,d913 858 882 1127 1197,u925 1059 1126 1133 1179,u934 927 936 1127 1173,d946 903 933 1100 1119,u958 825 897 1094 1107,u967 813 870 905 996,d979 819 876 1004 1022,d991 948 996 1010 1044,d1000 981 1015 1166 1179,u1012 993 1002 1160 1191,d1024 975 996 1082 1113,u1033 996 1041 1076 1146,u1045 942 954 1049 1122,d1054 924 936 1049 1062,d1066 1032 1041 1199 1200,d1078 1152 1203 1229 1245,u1087 1077 1188 1232 1257,' +
		'u1099 1119 1131 1190 1233,u1111 1086 1092 1139 1167,u1120 1032 1074 1099 1152,u1132 1068 1070 1073 1167,d1144 987 1071 1133 1140,d1153 1100 1137 1151 1167,u1165 1092 1104 1154 1167,d1174 1098 1099 1166 1179,d1186 1131 1170 1184 1190,d1198 1149 1188 1205 1233,d1207 1170 1209 1217 1230,d1219 1197 1210 1382 1394'},
	{x: 940, y: 560, sx: 3, sy: 3, rows: 'u31 475 493 548 548,u40 465 469 493 534,u52 349 381 480 495,d64 364 391 444 456,u74 280 292 450 462,u86 240 280 293 353,d95 270 280 353 354,u107 235 280 358 360,d118 235 281 353 365,d127 322 356 463 515,u140 382 388 463 503,d151 351 388 463 477,u160 435 468 472 515,d172 430 475 481 492,u184 402 415 487 490,d194 413 416 449 492,d205 420 452 487 489,d214 455 478 492 515,u226 458 498 501 515,d238 460 498 503 547,' +
		'u247 415 435 508 520,d260 393 441 461 533,u271 390 397 465 467,d280 375 390 443 460,u292 420 447 449 458,u304 380 408 455 500,u313 285 292 415 420,u325 219 220 287 315,d337 193 214 234 277,d346 225 235 316 340,d358 296 314 328 384,d367 305 322 350 364,u379 258 265 353 358,u391 228 240 260 282,u400 175 208 248 252,u412 168 169 203 216,d424 154 168 235 243,d433 213 234 287 320,d445 246 292 315 350,d457 312 319 423 441,' +
		'd466 413 424 500 502,d478 462 493 516 524,u487 460 486 510 528,u499 360 412 493 501,u511 331 387 410 428,d520 345 404 431 442,u532 379 390 427 434,d544 381 382 413 426,d553 402 412 424 427,u565 393 403 422 434,d577 402 410 445 446,u586 420 426 445 458,d599 403 416 426 431,d608 414 416 428 431,u619 425 426 428 440,u631 408 409 422 430,u640 363 379 404 410,u652 360 364 386 400,u664 318 339 362 372,u673 294 312 322 335,' +
		'd685 306 312 332 333,u697 304 306 322 328,d706 306 312 320 328,d718 330 331 343 345,u727 338 340 342 344,d739 336 345 351 353,d751 347 348 352 353,d763 345 346 349 350,u772 340 344 350 365,u784 277 278 372 384,d793 275 286 308 318,u805 255 268 297 304,u817 231 248 279 288,d826 229 232 253 268,d838 230 230 252 256,d847 240 243 255 264,d859 258 263 284 294,u871 270 274 285 286,u880 243 244 266 270,d892 242 253 284 288,' +
		'u904 270 274 285 294,u913 273 281 284 292,d925 272 289 292 294,d937 282 284 286 292,d946 274 275 288 292,u958 273 274 277 284,d967 273 274 277 284,d979 252 262 285 286,d991 264 270 284 294,d1000 267 273 289 292,d1012 280 291 304 344,d1024 303 306 344 345,u1033 312 312 352 353,u1045 288 289 322 344,u1057 228 231 295 318,d1066 229 240 302 324,u1078 88 139 293 302'},
	{x: 1280, y: 360, sx: 3, sy: 3, rows: 'u70 693 712 740 752,u79 672 678 707 714,u91 600 615 686 687,u100 600 605 623 650,d112 576 600 608 635,u124 543 561 602 603,u133 516 529 569 578,d145 504 522 533 534,u157 515 516 530 585,d166 504 510 518 540,u178 483 511 513 519,u190 414 438 517 519,u199 411 412 434 446,u211 366 367 407 408,u220 282 318 356 408,d232 300 310 401 408,u244 294 343 396 408,d253 342 343 389 408,u265 328 333 383 390,d277 309 327 356 380,' +
		'u286 294 348 357 395,u298 300 339 356 368,d310 318 330 350 390,u319 315 317 354 375,u331 280 283 323 356,d340 276 289 297 312,u352 255 283 291 318,d364 285 289 317 330,d373 294 321 342 350,d385 328 333 362 375,d397 342 354 377 408,u406 333 340 362 375,d418 339 340 364 378,u430 333 354 357 368,d439 343 344 395 408,u451 342 357 395 396,u460 340 347 366 371,d472 347 354 364 378,u484 210 225 368 369,d493 198 237 264 267,' +
		'd505 266 266 268 285,u517 243 266 269 272,d526 270 270 317 335,d538 315 321 342 357,u550 337 341 344 368,d559 327 333 345 360,d571 327 333 362 375,d580 360 366 395 414,u592 374 388 395 402,u604 360 372 401 408,d613 362 366 395 403,u625 347 360 389 390,u637 342 354 356 362,u646 333 339 362 368,d658 333 334 344 357,u670 294 300 335 337,d679 294 302 335 344,d691 303 330 336 342,u703 231 237 341 342,d712 204 232 246 262,' +
		'd724 231 237 317 356,u733 255 288 323 362,u745 249 262 284 286,d757 237 255 263 297,u766 198 238 263 265,u778 186 216 234 240,u790 30 54 224 227,d799 24 48 62 72,d811 60 61 194 212,d823 177 198 218 267,u832 153 158 212 224,d844 120 153 167 200,d853 157 171 226 228,d865 198 225 257 267,d877 240 262 323 357,u886 186 237 329 342,u898 127 138 245 246,u910 75 105 134 224,u919 66 99 101 156,d931 66 94 267 297,u943 147 226 267 402'},
	{x: 1500, y: 170, sx: 3, sy: 3, rows: 'u292 558 559 803 840,u304 519 546 560 609,u313 300 390 443 498,d325 378 384 453 504,u337 168 255 446 459,d346 252 252 536 705,d358 484 528 797 804,d370 804 805 1013 1112,u379 804 861 1019 1023,u391 765 786 857 941,d403 793 793 967 969,u412 811 850 962 984,d424 787 825 837 890,u433 552 583 845 864,u445 472 480 578 624,d457 465 487 493 600,u466 387 447 488 495,d478 408 438 493 566,d490 498 498 594 612'}
];

// price, from, to, colour, width, dash
var lines = [
	[15841.6, 1615, 1851, '#d21414', 2, '21 9'],
	[15825.6, 950, 1851, '#000', 1, ''],
	[15804.6, 1615, 1851, '#2020a8', 1, '12 12'],
	[15789.8, 950, 1615, '#000', 1, '4 4'],
	[15787.7, 1, 1655, '#808080', 1, ''],
	[15787.7, 1655, 1851, '#0000d8', 2, ''],
	[15783.6, 1615, 1851, '#000', 1, ''],
	[15778.4, 1, 1858, '#000', 1, '4 4'],
	[15767.7, 950, 1615, '#000', 1, '4 4'],
	[15767.6, 1615, 1851, '#3c963c', 1, '20 8'],
	[15756.1, 1, 1851, '#5ab4dc', 2, ''],
	[15749.8, 950, 1615, '#000', 1, '20 8'],
	[15731.8, 950, 1615, '#000', 1, '4 4'],
	[15706, 1, 1851, '#64148c', 2, ''],
	[15685.6, 950, 1851, '#3c963c', 1, '20 8'],
	[15682.4, 950, 1851, '#000', 1, ''],
	[15678.1, 950, 1851, '#2020a8', 1, '12 12'],
	[15673.9, 950, 1851, '#000', 1, ''],
	[15670.7, 950, 1851, '#e60000', 2, '21 9'],
	[15631.6, 1, 1851, '#5ab4dc', 2, '']
];

// price, x, anchor, text
var labels = [
	[15825.6, 1282, 'middle', '15 825,6 (0,00 %)'],
	[15789.8, 1282, 'middle', '15 789,8 (23,60 %)'],
	[15767.7, 1282, 'middle', '15 767,7 (38,20 %)'],
	[15749.8, 1282, 'middle', '15 749,8 (50,00 %)'],
	[15731.8, 1282, 'middle', '15 731,8 (61,80 %)'],
	[15706.4, 1282, 'middle', '15 706,4 (78,60 %)'],
	[15673.9, 1282, 'middle', '15 673,9 (100,00 %)'],
	[15825.6, 1732, 'middle', '15 825,6'],
	[15804.6, 1732, 'middle', '15 804,6'],
	[15783.6, 1732, 'middle', '15 783,6'],
	[15767.6, 1732, 'middle', '15 767,6'],
	[15685.6, 1401, 'middle', '15 685,6'],
	[15682.4, 1401, 'middle', '15 682,4'],
	[15678.1, 1401, 'middle', '15 678,1'],
	[15673.9, 1401, 'middle', '15 673,9'],
	[15670.7, 1401, 'middle', '15 670,7'],
	[15756.1, 1847, 'end', '9h 15 756,1'],
	[15706, 1848, 'end', 'Clo 17h 15 706,0'],
	[15631.6, 1847, 'end', '15h 15 631,6'],
	[15778.4, 11, 'start', 'Clo M']
];

var times = [[22, '21:00'], [109, '23:00'], [153, '22'], [197, '01:00'], [284, '03:00'], [371, '05:00'], [459, '07:00'], [546, '09:00'], [633, '11:00'], [720, '13:00'], [808, '15:00'], [895, '17:00'], [982, '19:00'], [1070, '21:00'], [1157, '23:00'], [1201, '23'], [1244, '01:00'], [1332, '03:00'], [1419, '05:00'], [1507, '07:00'], [1594, '09:00'], [1681, '11:00'], [1769, '13:00']];

var svg = document.getElementById('plot');

function draw() {
	var w = svg.clientWidth - AXIS_W;
	var h = svg.clientHeight - AXIS_H;
	var out = '';

	function X(v) { return (v - LEFT) * w / BASE_W; }
	function Y(v) { return (v - TOP) * h / BASE_H; }
	function P(p) { return Y(139.6 + (15840 - p) * 3.708); }
	function snap(v) { return Math.floor(v + 0.01) + 0.5; }
	function rect(x, y, x2, y2, attr) {
		out += '<rect x="' + x + '" y="' + y + '" width="' + (x2 - x) + '" height="' + (y2 - y) + '" ' + attr + '/>';
	}
	function line(x, y, x2, y2, attr) {
		out += '<line x1="' + x + '" y1="' + y + '" x2="' + x2 + '" y2="' + y2 + '" ' + attr + '/>';
	}
	function text(x, y, anchor, str, cls) {
		out += '<text x="' + x + '" y="' + y + '" text-anchor="' + anchor + '" class="' + (cls || '') + '">' + str + '</text>';
	}

	// zones
	rect(X(1615), snap(P(15825.6)), w, snap(P(15783.6)), 'fill="#ffdcee"');
	rect(X(950), snap(P(15682.4)), w, snap(P(15673.9)), 'fill="#cdebfd"');
	out += '<ellipse cx="' + X(1623.5) + '" cy="' + Y(538) + '" rx="29" ry="21.5" fill="#fde8dc" stroke="#f09664"/>';

	// candles
	blocks.forEach(function (b) {
		b.rows.split(',').forEach(function (row) {
			var up = row.charAt(0) === 'u';
			var v = row.slice(1).split(' ').map(Number);
			var x = snap(X(b.x + v[0] / b.sx));
			var y = v.slice(1).map(function (n) { return Math.round(Y(b.y + n / b.sy)); });
			line(x, y[0], x, Math.max(y[3], y[0] + 1), 'stroke="' + (up ? '#0a5a82' : '#aa3232') + '"');
			rect(x - 1, y[1] + 0.5, x + 1, Math.max(y[2], y[1] + 1) - 0.5 + 0.01, 'fill="' + (up ? '#1e96c8' : '#f06e6e') + '" stroke="' + (up ? '#0a5f8c' : '#b93737') + '"');
		});
	});

	// drawings
	line(X(950.5), P(15673.9), X(1615.5), P(15825.6), 'stroke="#000"');
	line(snap(X(1615)), P(15825.6), snap(X(1615)), P(15783.6), 'stroke="#000"');
	line(snap(X(950)), P(15682.4), snap(X(950)), P(15673.9), 'stroke="#000"');
	lines.forEach(function (l) {
		var y = l[4] === 2 ? Math.floor(P(l[0])) : snap(P(l[0]));
		line(X(l[1]), y, X(l[2]), y, 'stroke="' + l[3] + '" stroke-width="' + l[4] + '" stroke-dasharray="' + l[5] + '"');
	});
	labels.forEach(function (l) {
		text(X(l[1]), Math.floor(P(l[0])) - 4, l[2], l[3]);
	});
	text(2, h - 3, 'start', 'IT-Finance.com - Temps Réel');

	// axes
	line(0, h + 0.5, w + 1, h + 0.5, 'stroke="#7c8c94"');
	line(w + 0.5, 0, w + 0.5, h, 'stroke="#7c8c94"');
	for (var p = 15620; p <= 15840; p += 20) {
		line(w, snap(P(p)), w + 5, snap(P(p)), 'stroke="#7c8c94"');
		if (p !== 15780) {
			text(w + 7, Math.floor(P(p)) + 4, 'start', '15 ' + (p - 15000), p % 100 ? '' : 'day-mark');
		}
	}
	times.forEach(function (t) {
		line(snap(X(t[0])), h, snap(X(t[0])), h + 4, 'stroke="#7c8c94"');
		text(X(t[0]), h + 15, 'middle', t[1], t[1].length === 2 ? 'day-mark' : '');
	});
	svg.innerHTML = out;

	// html tags sit on their price
	document.querySelectorAll('[data-price]').forEach(function (el) {
		el.style.top = Math.floor(P(Number(el.dataset.price))) + 'px';
	});
}

draw();
window.addEventListener('resize', draw);
```
